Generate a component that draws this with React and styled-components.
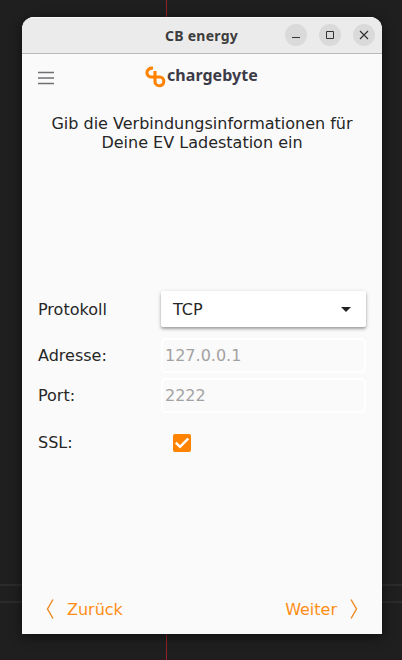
import React, { useState } from "react";
import styled, { createGlobalStyle } from "styled-components";

const GlobalStyle = createGlobalStyle`
  * { box-sizing: border-box; }
  body { margin: 0; background: #1f1f1f; }
  button, input { font: inherit; }
`;

const Desktop = styled.div`
  width: 402px;
  height: 660px;
  padding: 17px 20px 26px 22px;
  overflow: hidden;
  background:
    linear-gradient(#8f2226, #8f2226) 166px 0 / 1px 100% no-repeat,
    linear-gradient(#2b2b2b, #2b2b2b) 0 584px / 100% 2px no-repeat,
    linear-gradient(#2b2b2b, #2b2b2b) 0 601px / 100% 2px no-repeat,
    linear-gradient(#2c181c, #2c181c) 0 659px / 100% 1px no-repeat,
    #1f1f1f;
`;

const Window = styled.div`
  display: flex;
  flex-direction: column;
  width: 360px;
  height: 617px;
  overflow: hidden;
  border-radius: 12px 12px 0 0;
  background: #fafafa;
  box-shadow: 0 3px 12px rgba(0, 0, 0, 0.5);
  color: #262626;
  font: 16px/19px "DejaVu Sans", sans-serif;
`;

const TitleBar = styled.div`
  display: grid;
  grid-template-columns: 1fr auto 1fr;
  align-items: center;
  height: 37px;
  flex: none;
  padding: 0 7px;
  background: #ebebeb;
  border-bottom: 1px solid #bababa;
  box-shadow: inset 0 1px #f8f8f8;
`;

const Title = styled.div`
  grid-column: 2;
  color: #3d3d3d;
  font: 700 14px/20px "Noto Sans", sans-serif;
  letter-spacing: 0.25px;
  padding: 2px 1px 0 0;
`;

const WindowControls = styled.div`
  display: flex;
  justify-content: flex-end;
  gap: 12px;
`;

const WindowButton = styled.button`
  display: block;
  width: 22px;
  height: 22px;
  padding: 0;
  border: 0;
  border-radius: 50%;
  background: #dadada;
  svg { display: block; }
`;

const Header = styled.header`
  display: grid;
  grid-template-columns: 1fr auto 1fr;
  height: 48px;
  flex: none;
  align-items: center;
  padding: 0 16px;
`;

const MenuButton = styled.button`
  width: 16px;
  height: 14px;
  padding: 0;
  border: 0;
  background: none;
  svg { display: block; }
`;

const Logo = styled.div`
  display: flex;
  align-items: center;
  height: 24px;
  margin-bottom: 2px;
  color: #3d3b48;
  svg { display: block; flex: none; }
`;

const LogoName = styled.span`
  width: 92px;
  font: 700 16px/22px "Noto Sans", sans-serif;
  letter-spacing: 0.05px;
  padding-bottom: 4px;
`;

const Heading = styled.h1`
  margin: 12px 16px 0;
  height: 38px;
  flex: none;
  font-size: 16px;
  font-weight: 400;
  line-height: 19px;
  text-align: center;
`;

const Form = styled.form`
  display: flex;
  flex-direction: column;
  gap: 5px;
  margin: 139px 16px 0;
`;

const Field = styled.div`
  display: grid;
  grid-template-columns: 123px 205px;
  align-items: center;
  height: ${({ $height }) => $height}px;
  margin-top: ${({ $space = 0 }) => $space}px;
`;

const Label = styled.label``;

const Select = styled.button`
  display: flex;
  align-items: center;
  justify-content: space-between;
  height: 36px;
  padding: 0 15px 0 12px;
  border: 0;
  border-radius: 2px;
  background: #fff;
  color: #262626;
  box-shadow: 0 2px 3px rgba(0, 0, 0, 0.3), 0 1px 5px rgba(0, 0, 0, 0.12);
`;

const TextField = styled.input`
  width: 205px;
  height: 35px;
  padding: 0 2px;
  border: 2px solid #fff;
  border-radius: 5px;
  background: #fafafa;
  outline: 0;
  &::placeholder { color: #a2a2a2; opacity: 1; }
`;

const CheckBox = styled.button`
  width: 18px;
  height: 18px;
  padding: 0;
  margin-left: 12px;
  border: 0;
  border-radius: 2px;
  background: #ff8200;
  svg { display: block; }
`;

const Footer = styled.footer`
  display: flex;
  justify-content: space-between;
  margin-top: auto;
  padding: 0 24px 14px;
`;

const NavButton = styled.button`
  display: flex;
  align-items: center;
  gap: 13px;
  height: 22px;
  padding: 0;
  border: 0;
  background: none;
  color: #ff8d14;
  svg { display: block; }
`;

function Chevron({ forward }) {
  return (
    <svg width="8" height="20" viewBox="0 0 8 20" fill="none" stroke="#ed871e" strokeWidth="1.4">
      <path d={forward ? "M1 .5 6.5 10 1 19.5" : "M7 .5 1.5 10 7 19.5"} />
    </svg>
  );
}

function LogoMark() {
  return (
    <svg width="22" height="22" viewBox="0 0 22 22" fill="none" stroke="#ff8200" strokeWidth="3.1">
      <path d="M8 2.3C4.8 1.6 1.9 3.8 1.9 6.6c0 2.8 2.2 4.4 4.6 4.4h8.1a4.4 4.4 0 1 1-4.6 4.4V5" />
    </svg>
  );
}

export default function App() {
  const [ssl, setSsl] = useState(true);
  return (
    <>
      <GlobalStyle />
      <Desktop>
        <Window>
          <TitleBar>
            <Title>CB energy</Title>
            <WindowControls>
              <WindowButton aria-label="Minimieren">
                <svg width="22" height="22"><path d="M7 13.5h8" stroke="#333" /></svg>
              </WindowButton>
              <WindowButton aria-label="Maximieren">
                <svg width="22" height="22"><path d="M7.5 7.5h7v7h-7z" fill="none" stroke="#333" /></svg>
              </WindowButton>
              <WindowButton aria-label="Schließen">
                <svg width="22" height="22"><path d="m7 7 8 8m0-8-8 8" stroke="#333" strokeWidth="1.2" /></svg>
              </WindowButton>
            </WindowControls>
          </TitleBar>
          <Header>
            <MenuButton aria-label="Menü">
              <svg width="16" height="14" stroke="#707074" strokeWidth="1.3">
                <path d="M0 1.5h16M0 7h16M0 12.5h16" />
              </svg>
            </MenuButton>
            <Logo>
              <LogoMark />
              <LogoName>chargebyte</LogoName>
            </Logo>
          </Header>
          <Heading>
            Gib die Verbindungsinformationen für
            <br />
            Deine EV Ladestation ein
          </Heading>
          <Form>
            <Field $height={36}>
              <Label>Protokoll</Label>
              <Select type="button">
                TCP
                <svg width="10" height="5"><path d="M0 0h10L5 5z" fill="#222" /></svg>
              </Select>
            </Field>
            <Field $height={35} $space={6}>
              <Label>Adresse:</Label>
              <TextField placeholder="127.0.0.1" />
            </Field>
            <Field $height={35}>
              <Label>Port:</Label>
              <TextField placeholder="2222" />
            </Field>
            <Field $height={18} $space={15}>
              <Label>SSL:</Label>
              <CheckBox type="button" role="checkbox" aria-checked={ssl} onClick={() => setSsl(!ssl)}>
                {ssl && (
                  <svg width="18" height="18" fill="none" stroke="#fff" strokeWidth="2.5">
                    <path d="m2.8 8.7 4.2 4.1 8.2-8.2" />
                  </svg>
                )}
              </CheckBox>
            </Field>
          </Form>
          <Footer>
            <NavButton><Chevron />Zurück</NavButton>
            <NavButton>Weiter<Chevron forward /></NavButton>
          </Footer>
        </Window>
      </Desktop>
    </>
  );
}
